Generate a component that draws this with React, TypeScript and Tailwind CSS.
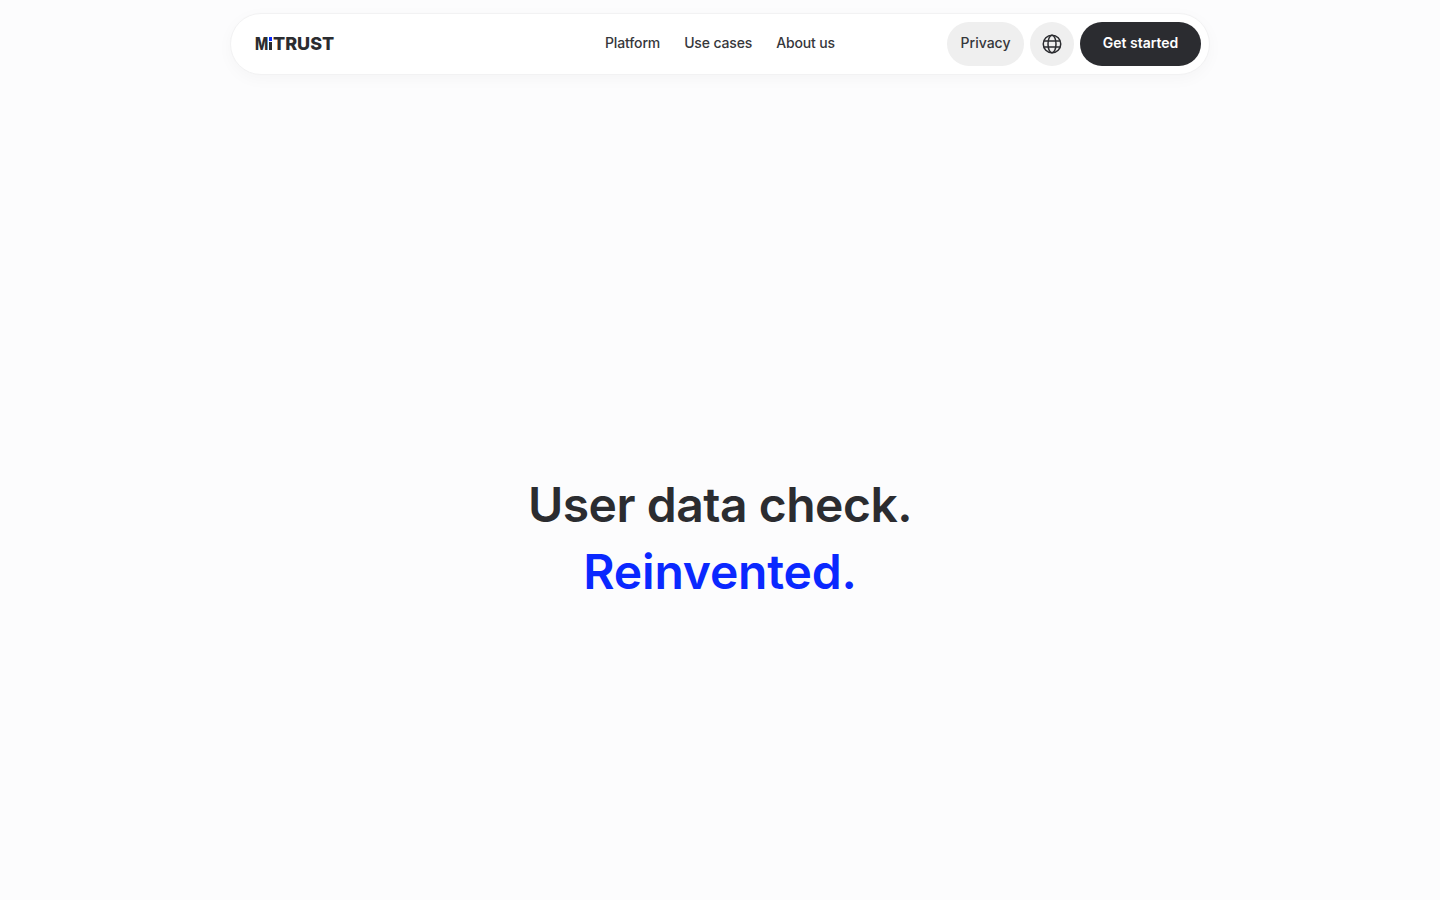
import React from 'react';

const links = ['Platform', 'Use cases', 'About us'];

const GlobeIcon = () => (
  <svg width="20" height="20" viewBox="0 0 20 20" fill="none" stroke="currentColor" strokeWidth="1.5">
    <circle cx="10" cy="10" r="8.75" />
    <ellipse cx="10" cy="10" rx="4" ry="8.75" />
    <path d="M1.9 7h16.2M1.9 13h16.2" />
  </svg>
);

const Logo = () => (
  <div className="flex items-end text-[18px] font-extrabold leading-[18px] text-[#2b2c30]">
    <span className="inline-block w-[13px] origin-left scale-x-[0.78]">M</span>
    <span className="mx-[1px] flex flex-col items-center gap-[1px] self-end pb-[3px]">
      <span className="h-[4px] w-[3px] bg-[#0a28ff]" />
      <span className="h-[8px] w-[3px] bg-[#2b2c30]" />
    </span>
    <span>TRUST</span>
  </div>
);

export default function App() {
  return (
    <div className="flex min-h-screen flex-col items-center bg-[#fcfcfd] font-['Inter',sans-serif]">
      <header className="mt-[13px] flex h-[62px] w-[980px] items-center rounded-[31px] border border-[#f2f2f3] bg-white pl-[24px] pr-[8px] shadow-[0_4px_16px_rgba(0,0,0,0.03)]">
        <div className="flex flex-1 items-center">
          <Logo />
        </div>
        <nav className="mr-[16px] flex items-center gap-6 pb-[2px] text-sm font-medium tracking-[-0.01em] text-[#36373b]">
          {links.map((l) => (
            <a key={l} href="#">
              {l}
            </a>
          ))}
        </nav>
        <div className="flex flex-1 items-center justify-end gap-[6px]">
          <button className="h-11 w-[77px] rounded-full bg-[#efefef] pb-[2px] text-sm font-medium text-[#36373b]">Privacy</button>
          <button className="flex h-11 w-11 items-center justify-center rounded-full bg-[#efefef] text-[#2b2c30]">
            <GlobeIcon />
          </button>
          <button className="h-11 w-[121px] rounded-full bg-[#2b2c30] pb-[2px] text-sm font-semibold text-white">Get started</button>
        </div>
      </header>
      <main className="flex flex-col items-center pt-[396px] text-center text-[48px] font-semibold leading-[67px]">
        <h1 className="tracking-[-0.01em] text-[#2b2c30]">User data check.</h1>
        <h2 className="tracking-[-0.004em] text-[#0a28ff]">Reinvented.</h2>
      </main>
    </div>
  );
}
